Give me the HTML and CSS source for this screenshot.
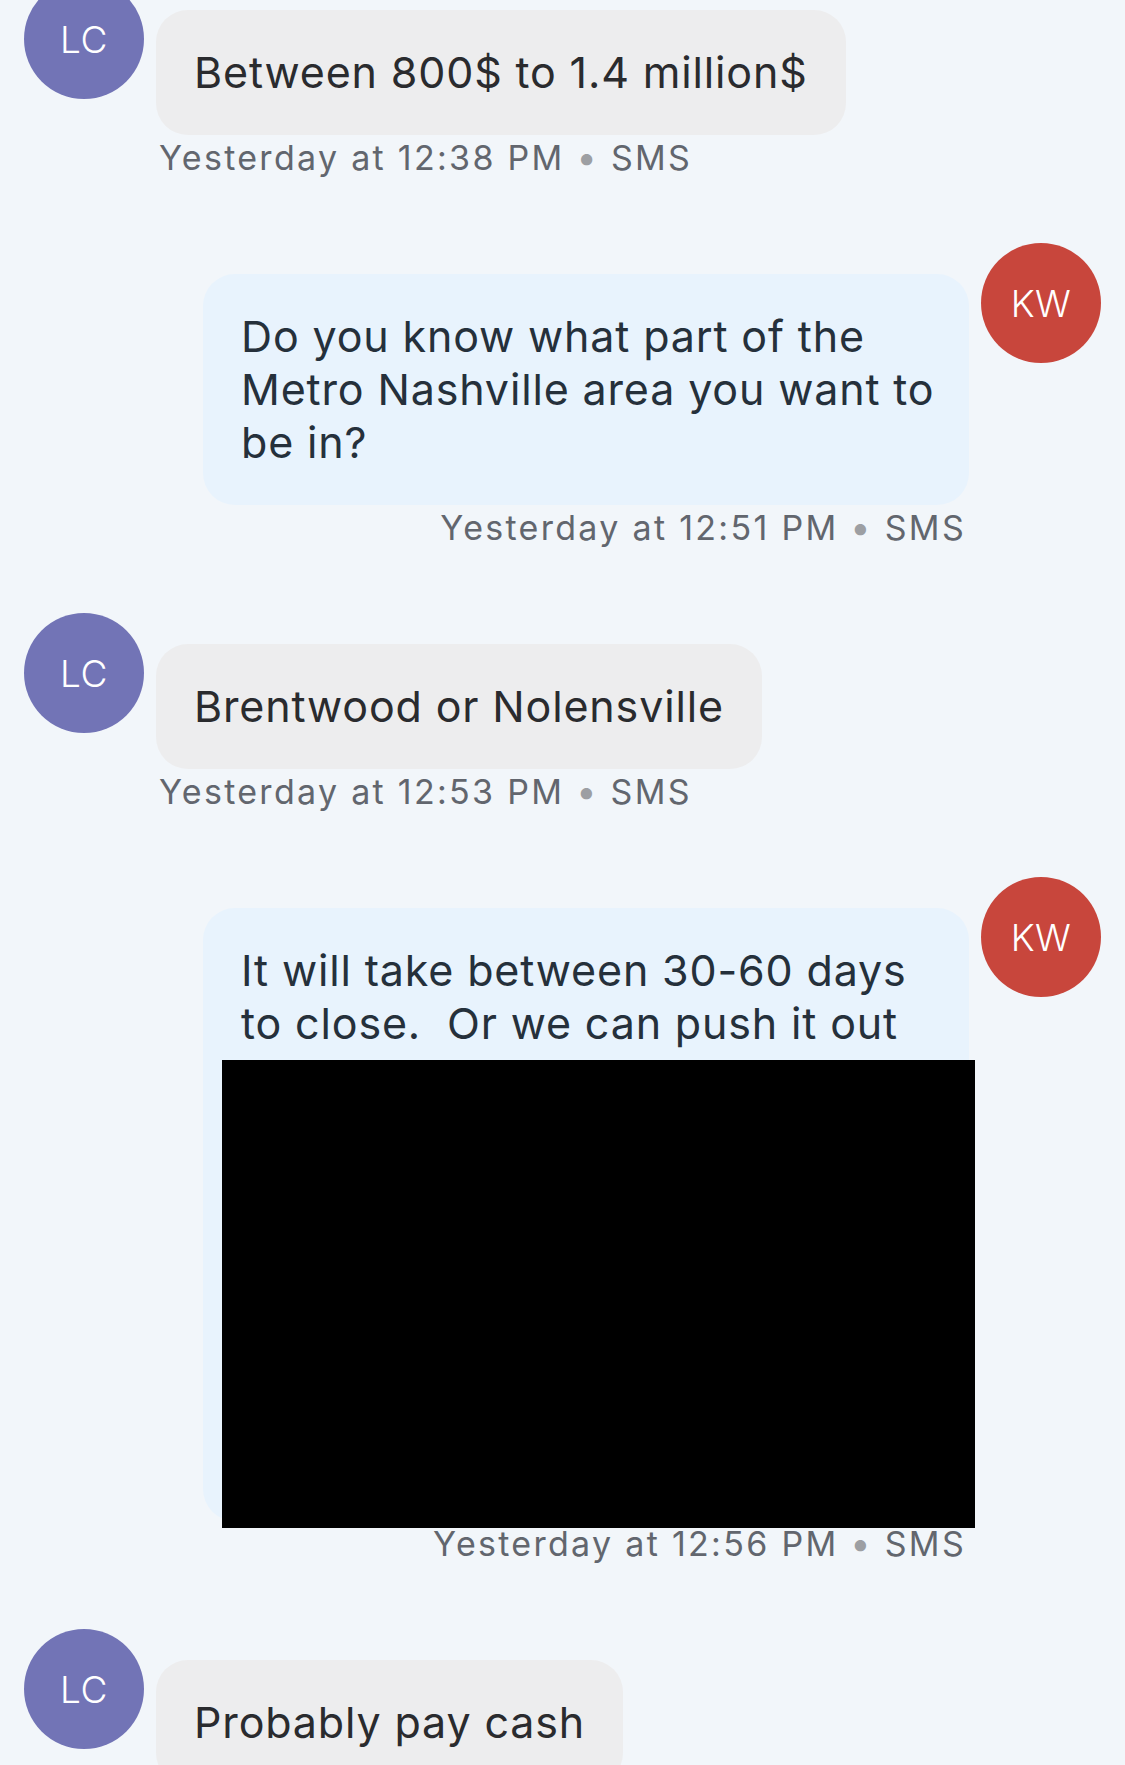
FILE: index.html
```html
<!DOCTYPE html>
<html lang="en">
<head>
  <meta charset="UTF-8">
  <title>Conversation</title>
  <link rel="stylesheet" href="styles.css">
</head>
<body>
  <div class="thread">

    <div class="msg in">
      <div class="avatar lc">LC</div>
      <div class="body">
        <div class="bubble">Between 800$ to 1.4 million$</div>
        <div class="meta">Yesterday at 12:38 PM <span class="dot">•</span> SMS</div>
      </div>
    </div>

    <div class="msg out">
      <div class="avatar kw">KW</div>
      <div class="body">
        <div class="bubble">Do you know what part of the Metro Nashville area you want to be in?</div>
        <div class="meta">Yesterday at 12:51 PM <span class="dot">•</span> SMS</div>
      </div>
    </div>

    <div class="msg in">
      <div class="avatar lc">LC</div>
      <div class="body">
        <div class="bubble">Brentwood or Nolensville</div>
        <div class="meta">Yesterday at 12:53 PM <span class="dot">•</span> SMS</div>
      </div>
    </div>

    <div class="msg out">
      <div class="avatar kw">KW</div>
      <div class="body">
        <div class="bubble">
          It will take between 30-60 days to close.&nbsp; Or we can push it out
          <div class="redacted"></div>
        </div>
        <div class="meta">Yesterday at 12:56 PM <span class="dot">•</span> SMS</div>
      </div>
    </div>

    <div class="msg in">
      <div class="avatar lc">LC</div>
      <div class="body">
        <div class="bubble">Probably pay cash</div>
      </div>
    </div>

  </div>
</body>
</html>
```

FILE: styles.css
```css
html, body {
  margin: 0;
  background: #f2f6fa;
}
body {
  font-family: Inter, "Noto Sans", sans-serif;
  color: #2a2b2e;
  overflow: hidden;
}
.thread {
  display: flex;
  flex-direction: column;
  gap: 65px;
  margin-top: -21px;
}
.msg {
  display: flex;
  align-items: flex-start;
}
.msg.out {
  flex-direction: row-reverse;
}
.avatar {
  flex: none;
  width: 120px;
  height: 120px;
  border-radius: 50%;
  display: flex;
  align-items: center;
  justify-content: center;
  color: #fff;
  font-size: 37px;
  font-weight: 300;
  letter-spacing: 0.5px;
}
.avatar.lc {
  background: #7274b6;
  margin-left: 24px;
}
.avatar.kw {
  background: #c8463c;
  margin-right: 24px;
}
.body {
  display: flex;
  flex-direction: column;
  margin-top: 31px;
}
.in .body {
  margin-left: 12px;
  align-items: flex-start;
}
.out .body {
  margin-right: 12px;
  align-items: flex-end;
}
.bubble {
  box-sizing: border-box;
  padding: 36px 38px;
  border-radius: 32px;
  font-size: 43px;
  line-height: 53px;
  letter-spacing: 0.85px;
  background: #ededee;
}
.out .bubble {
  width: 766px;
  padding-right: 30px;
  background: #e8f3fd;
  color: #25303b;
}
.redacted {
  height: 468px;
  margin: 10px -36px -43px -19px;
  background: #000;
}
.meta {
  margin-top: 3px;
  padding: 0 3px;
  font-size: 34px;
  line-height: 40px;
  letter-spacing: 2.3px;
  color: #62666e;
}
.dot {
  color: #9d9fa3;
  font-size: 36px;
  line-height: 0;
}
```
